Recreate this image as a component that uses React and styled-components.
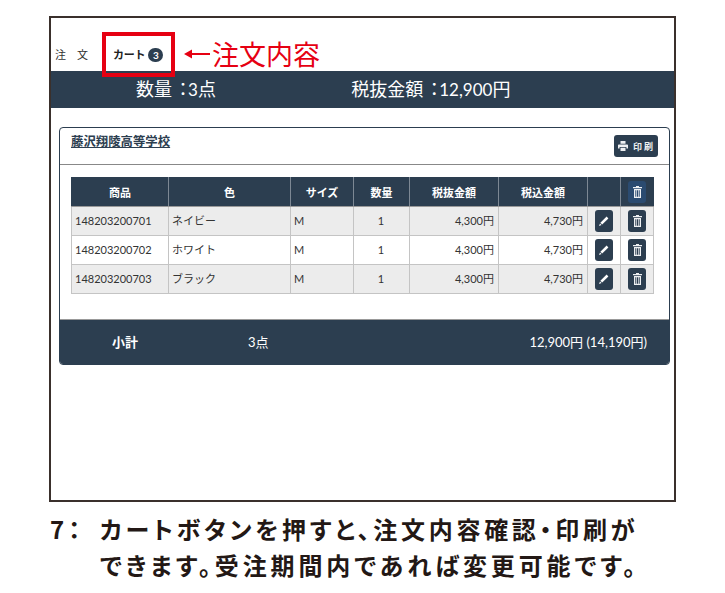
import React from 'react'
import styled, { createGlobalStyle } from 'styled-components'

const navy = '#2c3e50'
const sans = '"Lato", "Noto Sans CJK JP", sans-serif'

const GlobalStyle = createGlobalStyle`
  html, body { margin: 0; padding: 0; background: #fff; }
  body { font-family: ${sans}; color: #333; }
`

const Page = styled.div`
  width: 725px;
  height: 593px;
  padding: 16px 0 0 49px;
  box-sizing: border-box;
  overflow: hidden;
`

const Frame = styled.div`
  position: relative;
  width: 627px;
  height: 486px;
  box-sizing: border-box;
  border: 2px solid #3a302c;
`

const Tabs = styled.div`
  height: 53px;
  display: flex;
  align-items: flex-end;
  padding-left: 4px;
  padding-bottom: 9px;
  box-sizing: border-box;
  font-size: 11px;
  line-height: 15px;
`

const Tab = styled.div`
  width: 58px;
  letter-spacing: ${p => (p.$active ? '-0.2px' : '11px')};
  font-weight: ${p => (p.$active ? 700 : 400)};
  color: ${p => (p.$active ? '#222' : '#333')};
  white-space: nowrap;
  display: flex;
  align-items: center;
  gap: 3px;
`

const Badge = styled.span`
  width: 15px;
  height: 14px;
  border-radius: 7px;
  background: ${navy};
  color: #fff;
  font-size: 10px;
  font-weight: 700;
  letter-spacing: 0;
  line-height: 14px;
  text-align: center;
`

const RedBox = styled.div`
  position: absolute;
  left: 51px;
  top: 14px;
  width: 73px;
  height: 45px;
  box-sizing: border-box;
  border: 4px solid #e60012;
`

const Note = styled.div`
  position: absolute;
  left: 133px;
  top: 17px;
  color: #e60012;
  font-size: 27px;
  line-height: 38px;
  font-family: "Noto Sans CJK JP", sans-serif;
  font-weight: 400;
  white-space: nowrap;
  display: flex;
  align-items: center;
  gap: 2px;
`

const SummaryBar = styled.div`
  height: 37px;
  background: ${navy};
  color: #fff;
  font-size: 18px;
  line-height: 37px;
  display: flex;
`

const SummaryCell = styled.div`
  width: ${p => p.$w}px;
  padding-left: ${p => p.$pad}px;
  box-sizing: border-box;
  white-space: nowrap;
`

const Colon = styled.span`
  padding-left: 2px;
  letter-spacing: -4px;
`

const Num = styled.span`
  font-size: 17px;
`

const Panel = styled.div`
  margin: 19px 0 0 8px;
  width: 611px;
  height: 238px;
  box-sizing: border-box;
  border: 1px solid ${navy};
  border-radius: 4px;
  display: flex;
  flex-direction: column;
  overflow: hidden;
`

const PanelHead = styled.div`
  height: 37px;
  flex: none;
  box-sizing: border-box;
  border-bottom: 1px solid #888;
  display: flex;
  justify-content: space-between;
  align-items: flex-start;
  padding: 6px 11px 0 11px;
`

const SchoolLink = styled.a`
  font-size: 12.4px;
  font-weight: 700;
  line-height: 15px;
  color: ${navy};
  text-decoration: underline;
`

const PrintButton = styled.button`
  width: 44px;
  height: 22px;
  margin-top: 1px;
  padding: 0 0 0 1px;
  border: 0;
  border-radius: 3px;
  background: ${navy};
  color: #eef0f2;
  font-family: ${sans};
  font-size: 9px;
  font-weight: 700;
  letter-spacing: 2px;
  display: flex;
  align-items: center;
  justify-content: center;
  gap: 5px;
`

const PanelBody = styled.div`
  flex: 1;
  padding: 12px 16px 0 11px;
`

const Table = styled.table`
  width: 582px;
  table-layout: fixed;
  border-collapse: collapse;
  font-size: 11px;
`

const Th = styled.th`
  height: 28px;
  padding: 0;
  background: ${navy};
  color: #fff;
  font-size: 11px;
  font-weight: 700;
  text-align: center;
  border: 1px solid #7d8894;
  border-top-color: ${navy};
  border-bottom: 1px solid #999;
  &:first-child { border-left-color: ${navy}; }
  &:last-child { border-right-color: ${navy}; }
`

const Row = styled.tr`
  background: ${p => (p.$odd ? '#ececec' : '#fff')};
`

const Td = styled.td`
  height: 28px;
  padding: 0 4px 2px 3px;
  box-sizing: border-box;
  border: 1px solid #c4c4c4;
  text-align: ${p => p.$align || 'left'};
  color: #333;
  white-space: nowrap;
`

const IconCell = styled.td`
  height: 28px;
  padding: 0;
  border: 1px solid #c4c4c4;
  text-align: center;
  vertical-align: middle;
`

const IconButton = styled.span`
  width: 18px;
  height: 22px;
  margin: 0 auto;
  border-radius: 3px;
  background: ${p => (p.$light ? '#2b4b70' : navy)};
  display: flex;
  align-items: center;
  justify-content: center;
`

const Footer = styled.div`
  margin-top: auto;
  height: 45px;
  flex: none;
  box-sizing: border-box;
  border-top: 1px solid #999;
  background: ${navy};
  color: #fff;
  font-size: 13px;
  line-height: 44px;
  display: flex;
  padding-left: 52px;
  padding-right: 22px;
`

const FooterLabel = styled.div`
  width: 136px;
  font-weight: 700;
`

const FooterTotal = styled.div`
  margin-left: auto;
`

const Caption = styled.div`
  margin: 9px 0 0 1px;
  color: #231815;
  font-family: "Noto Sans CJK JP", sans-serif;
  font-weight: 700;
  font-size: 24px;
  line-height: 36px;
  font-feature-settings: "palt";
  white-space: nowrap;
  display: grid;
  grid-template-columns: 50px auto;
  justify-content: start;
`

const CaptionLine = styled.div`
  letter-spacing: ${p => p.$track}px;
`

function ArrowIcon() {
  return (
    <svg width="26" height="14" viewBox="0 0 26 14" fill="#e60012">
      <path d="M0 7 8 2.5v3.6h18v1.8H8v3.6z" />
    </svg>
  )
}

function PrintIcon() {
  return (
    <svg width="10" height="10" viewBox="0 0 10 10" fill="#eef0f2">
      <path d="M2.5 0h5v2.8h-5z" />
      <path d="M.8 3.5h8.4a.8.8 0 0 1 .8.8V7.5H8.4V6H1.6v1.5H0V4.3a.8.8 0 0 1 .8-.8z" />
      <path d="M2.5 6.8h5V10h-5z" />
    </svg>
  )
}

function PencilIcon() {
  return (
    <svg width="10" height="10" viewBox="0 0 10 10" fill="#fff">
      <path d="M7.6 .6 9.4 2.4 3.2 8.6 1.4 6.8z" />
      <path d="M1 7.4 2.6 9 0 10z" />
    </svg>
  )
}

function TrashIcon() {
  return (
    <svg width="9" height="12" viewBox="0 0 9 12" fill="#eef0f2">
      <path d="M3 0h3v1h3v1.2H0V1h3z" />
      <path fillRule="evenodd" d="M1 3h7v9H1zM2.3 4.2v6.6h1V4.2zM4 4.2v6.6h1V4.2zM5.7 4.2v6.6h1V4.2z" />
    </svg>
  )
}

const rows = [
  { code: '148203200701', color: 'ネイビー' },
  { code: '148203200702', color: 'ホワイト' },
  { code: '148203200703', color: 'ブラック' },
]

export default function App() {
  return (
    <Page>
      <GlobalStyle />
      <Frame>
        <Tabs>
          <Tab>注文</Tab>
          <Tab $active>カート<Badge>3</Badge></Tab>
        </Tabs>
        <RedBox />
        <Note><ArrowIcon />注文内容</Note>
        <SummaryBar>
          <SummaryCell $w={301} $pad={85}>数量<Colon>：</Colon><Num>3</Num>点</SummaryCell>
          <SummaryCell $w={324} $pad={0}>税抜金額<Colon>：</Colon><Num>12,900</Num>円</SummaryCell>
        </SummaryBar>
        <Panel>
          <PanelHead>
            <SchoolLink>藤沢翔陵高等学校</SchoolLink>
            <PrintButton><PrintIcon />印刷</PrintButton>
          </PanelHead>
          <PanelBody>
            <Table>
              <colgroup>
                <col style={{ width: 97 }} />
                <col style={{ width: 122 }} />
                <col style={{ width: 63 }} />
                <col style={{ width: 56 }} />
                <col style={{ width: 89 }} />
                <col style={{ width: 89 }} />
                <col style={{ width: 33 }} />
                <col style={{ width: 33 }} />
              </colgroup>
              <thead>
                <tr>
                  <Th>商品</Th>
                  <Th>色</Th>
                  <Th>サイズ</Th>
                  <Th>数量</Th>
                  <Th>税抜金額</Th>
                  <Th>税込金額</Th>
                  <Th />
                  <Th><IconButton $light><TrashIcon /></IconButton></Th>
                </tr>
              </thead>
              <tbody>
                {rows.map((r, i) => (
                  <Row key={r.code} $odd={i % 2 === 0}>
                    <Td>{r.code}</Td>
                    <Td>{r.color}</Td>
                    <Td>M</Td>
                    <Td $align="center">1</Td>
                    <Td $align="right">4,300円</Td>
                    <Td $align="right">4,730円</Td>
                    <IconCell><IconButton><PencilIcon /></IconButton></IconCell>
                    <IconCell><IconButton><TrashIcon /></IconButton></IconCell>
                  </Row>
                ))}
              </tbody>
            </Table>
          </PanelBody>
          <Footer>
            <FooterLabel>小計</FooterLabel>
            <div>3点</div>
            <FooterTotal>12,900円 (14,190円)</FooterTotal>
          </Footer>
        </Panel>
      </Frame>
      <Caption>
        <CaptionLine $track={4}>7：</CaptionLine>
        <CaptionLine $track={3.7}>カートボタンを押すと、注文内容確認・印刷が</CaptionLine>
        <div />
        <CaptionLine $track={3.9}>できます。受注期間内であれば変更可能です。</CaptionLine>
      </Caption>
    </Page>
  )
}
